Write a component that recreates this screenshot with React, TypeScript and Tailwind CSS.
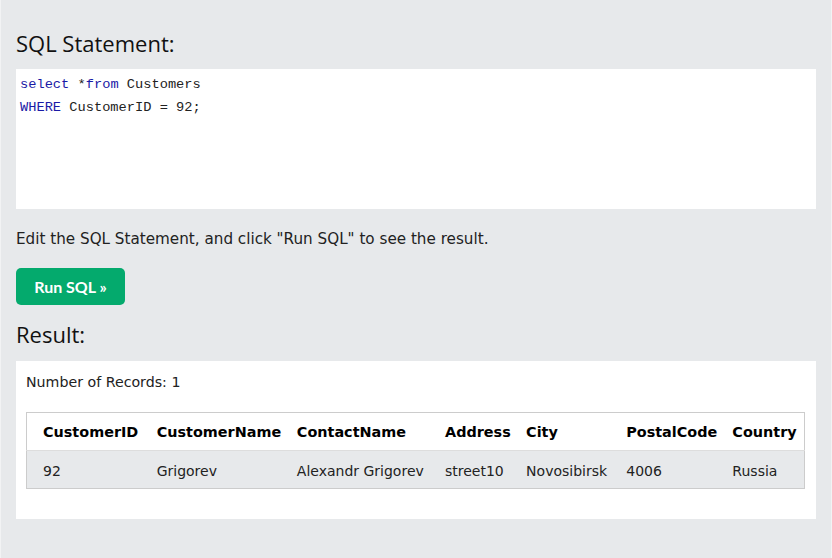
import React from "react";

const columns = [
  { key: "CustomerID", w: "w-[122px] pl-4" },
  { key: "CustomerName", w: "w-[140px] pl-2" },
  { key: "ContactName", w: "w-[148px] pl-2" },
  { key: "Address", w: "w-[81px] pl-2" },
  { key: "City", w: "w-[100px] pl-2" },
  { key: "PostalCode", w: "w-[106px] pl-2" },
  { key: "Country", w: "w-[80px] pl-2" },
];

const rows = [
  ["92", "Grigorev", "Alexandr Grigorev", "street10", "Novosibirsk", "4006", "Russia"],
];

export default function App() {
  return (
    <div className="w-[832px] h-[558px] bg-[#e7e9eb] border-x border-[#f2f3f4] overflow-hidden text-black">
      <div className="px-[15px] pt-[29px]">
        <h2 className="text-[22px] leading-[28px] font-['Open_Sans',sans-serif] text-[#111]">SQL Statement:</h2>

        {/* editor */}
        <div className="mt-[12px] h-[140px] bg-white pl-1 pt-[4px] font-['Liberation_Mono',monospace] text-[13.7px] leading-[23px] text-[#222]">
          <div>
            <span className="text-[#1a1aa6]">select</span> *<span className="text-[#1a1aa6]">from</span> Customers
          </div>
          <div>
            <span className="text-[#1a1aa6]">WHERE</span> CustomerID = 92;
          </div>
        </div>

        <p className="mt-[20px] text-[15.2px] leading-[20px] font-['DejaVu_Sans',sans-serif] text-[#222]">
          Edit the SQL Statement, and click "Run SQL" to see the result.
        </p>

        <button className="mt-[19px] w-[109px] h-[37px] rounded-[5px] bg-[#04aa6d] text-white font-['Lato',sans-serif] font-bold text-[16px] flex items-center justify-center">
          Run SQL »
        </button>

        <h2 className="mt-[15px] text-[22px] leading-[28px] font-['Open_Sans',sans-serif] text-[#111]">Result:</h2>

        {/* result panel */}
        <div className="mt-[13px] h-[158px] bg-white px-[10px] pt-[12px] font-['DejaVu_Sans',sans-serif] text-[#222]">
          <div className="text-[14.2px] leading-[18px]">Number of Records: 1</div>
          <table className="mt-[21px] table-fixed border-collapse border border-[#cccccc] w-[779px]">
            <thead>
              <tr className="h-[38px]">
                {columns.map((c) => (
                  <th key={c.key} className={`${c.w} pt-[3px] text-left font-bold text-[14.4px] text-black`}>
                    {c.key}
                  </th>
                ))}
              </tr>
            </thead>
            <tbody>
              {rows.map((r, i) => (
                <tr key={i} className="h-[38px] bg-[#e7e9eb] border-t border-[#dddddd]">
                  {r.map((v, j) => (
                    <td key={j} className={`${columns[j].w} pt-[3px] text-left text-[14px] whitespace-nowrap`}>
                      {v}
                    </td>
                  ))}
                </tr>
              ))}
            </tbody>
          </table>
        </div>
      </div>
    </div>
  );
}
